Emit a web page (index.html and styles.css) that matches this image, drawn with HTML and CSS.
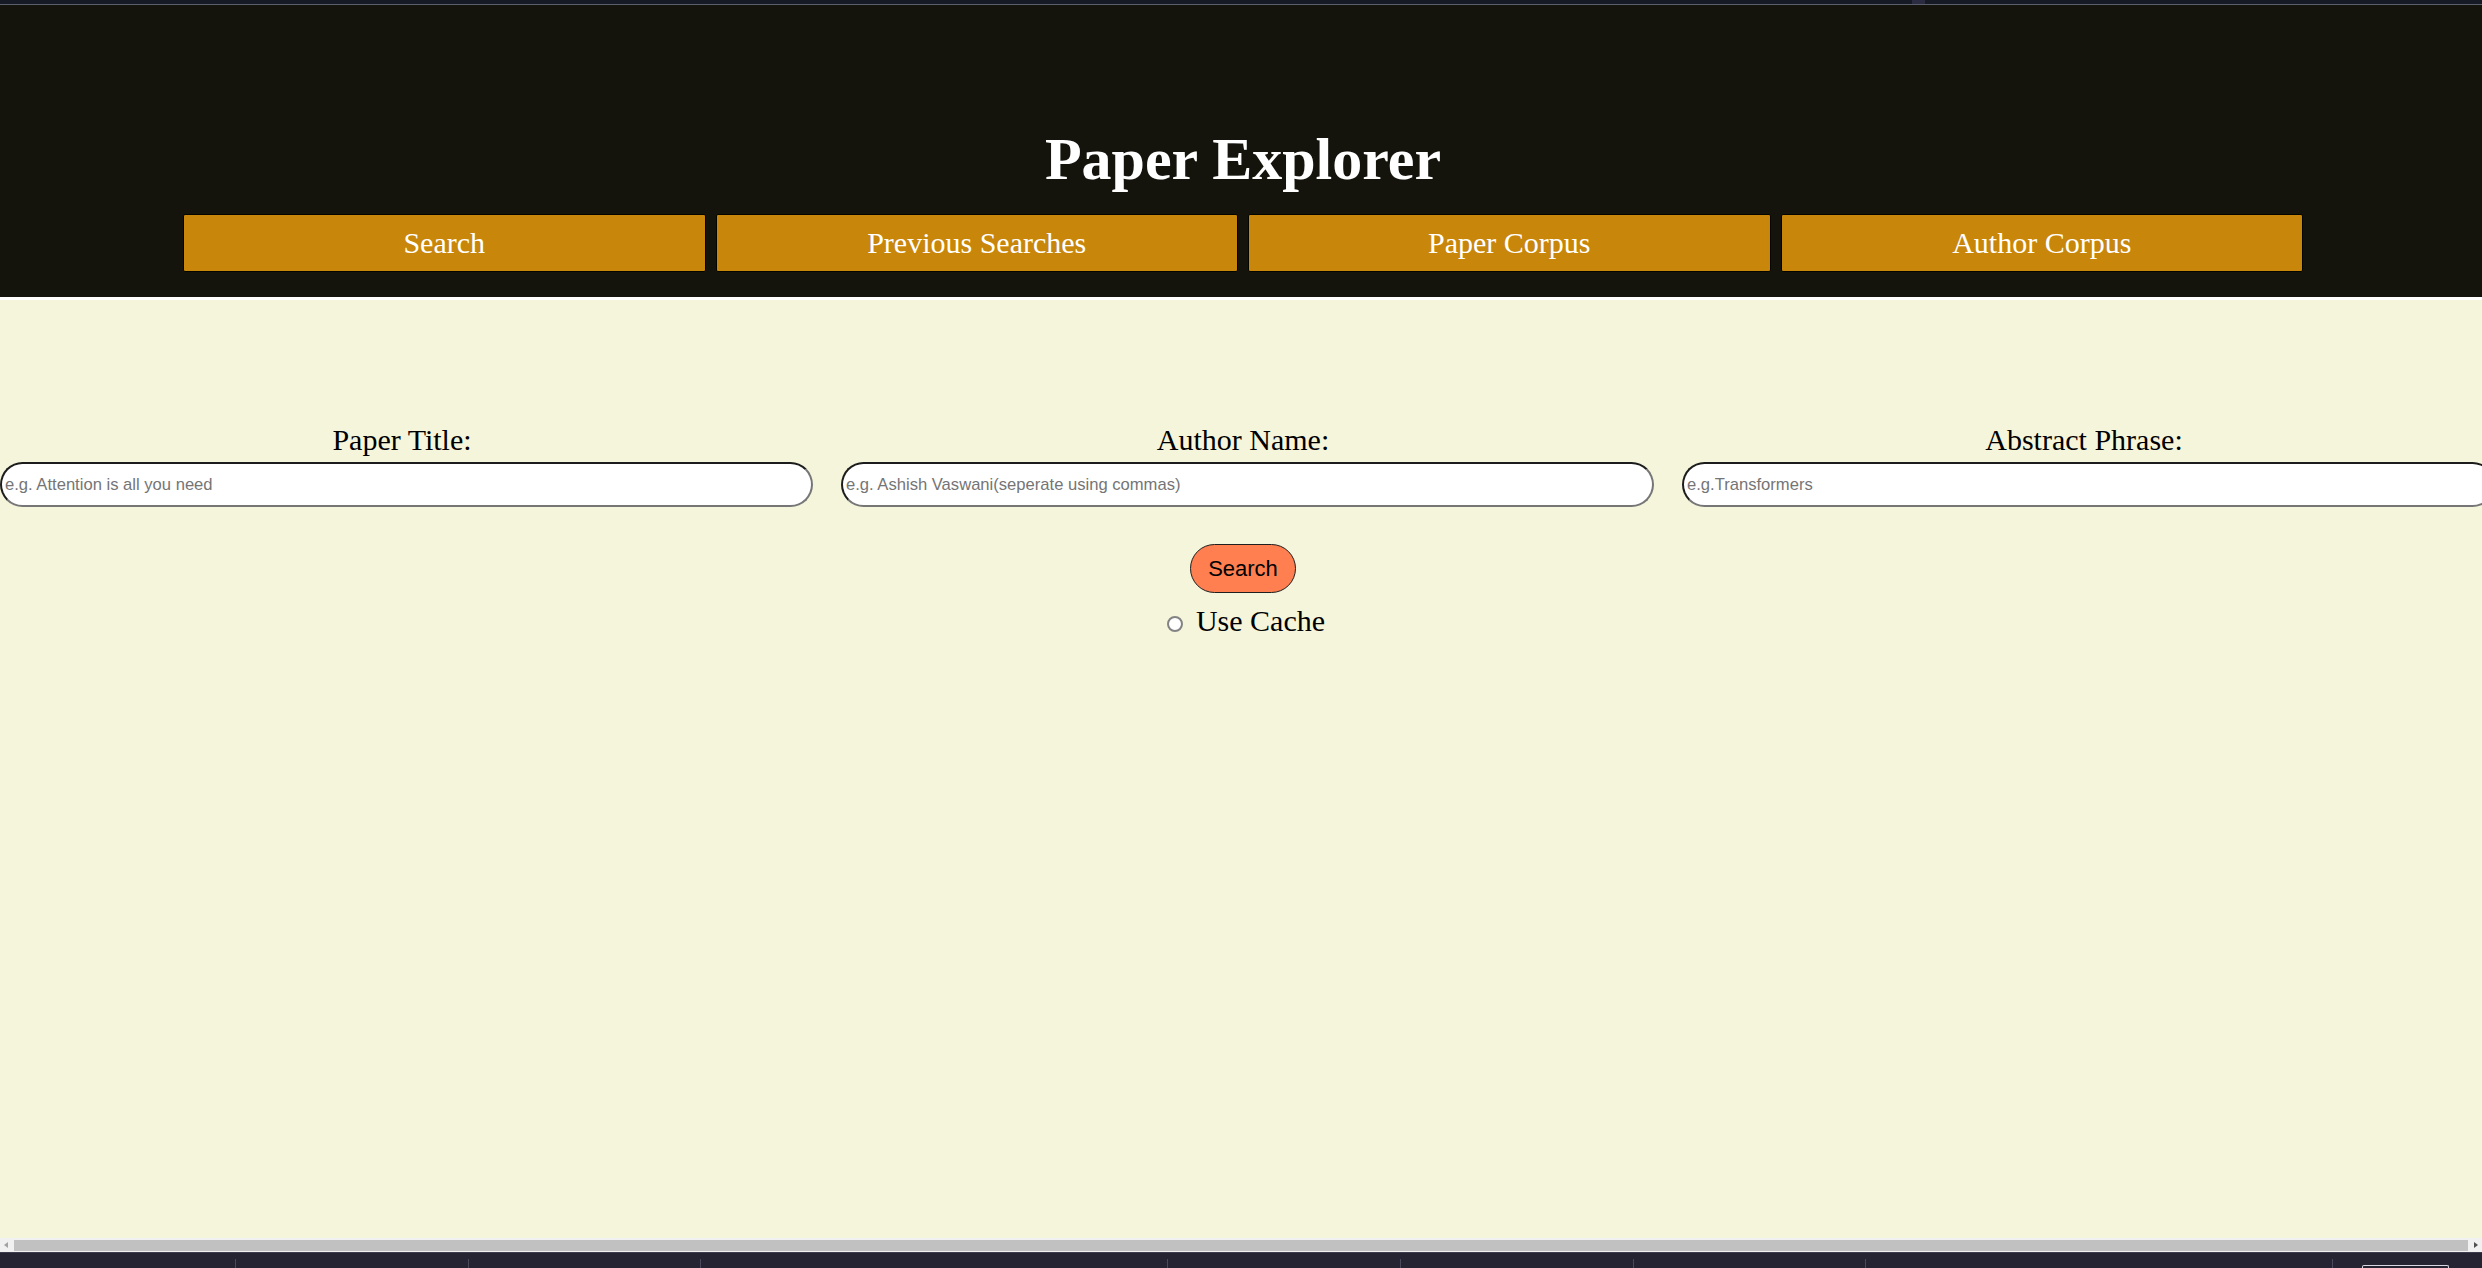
FILE: index.html
```html
<!DOCTYPE html>
<html lang="en">
<head>
<meta charset="utf-8">
<title>Paper Explorer</title>
<link rel="stylesheet" href="styles.css">
</head>
<body>
<div class="topbar"><div class="topbar-fill"></div><div class="topbar-tab"></div><div class="topbar-rest"></div></div>
<header class="header">
  <h1 class="title">Paper Explorer</h1>
  <nav class="nav">
    <div class="nav-btn">Search</div>
    <div class="nav-btn">Previous Searches</div>
    <div class="nav-btn">Paper Corpus</div>
    <div class="nav-btn">Author Corpus</div>
  </nav>
</header>
<div class="sep"></div>
<main class="main">
  <div class="fields">
    <div class="field">
      <label class="field-label">Paper Title:</label>
      <input class="field-input" type="text" placeholder="e.g. Attention is all you need">
    </div>
    <div class="field">
      <label class="field-label">Author Name:</label>
      <input class="field-input" type="text" placeholder="e.g. Ashish Vaswani(seperate using commas)">
    </div>
    <div class="field">
      <label class="field-label">Abstract Phrase:</label>
      <input class="field-input" type="text" placeholder="e.g.Transformers">
    </div>
  </div>
  <div class="actions">
    <button class="search-btn">Search</button>
    <div class="cache-row">
      <span class="radio"></span>
      <span class="cache-label">Use Cache</span>
    </div>
  </div>
</main>
<div class="hscroll">
  <span class="arrow arrow-left"></span>
  <div class="thumb"></div>
  <span class="arrow arrow-right"></span>
</div>
<div class="taskbar">
  <div class="seg w236"></div>
  <div class="seg w233"></div>
  <div class="seg w232"></div>
  <div class="seg w467"></div>
  <div class="seg w233"></div>
  <div class="seg w233"></div>
  <div class="seg w232"></div>
  <div class="seg w467"></div>
  <div class="seg last"><div class="tray"></div></div>
</div>
</body>
</html>
```
FILE: styles.css
```css
html, body {
  margin: 0;
  padding: 0;
}
body {
  height: 100vh;
  display: flex;
  flex-direction: column;
  overflow: hidden;
  background: #f5f5dc;
  font-family: "Liberation Serif", "Times New Roman", serif;
}
.topbar {
  height: 4px;
  flex: none;
  display: flex;
  background: #161a25;
  border-bottom: 1px solid #5b5f6b;
}
.topbar-fill { width: 1912px; }
.topbar-tab { width: 13px; background: #2b2b42; }
.topbar-rest { flex: 1; }
.header {
  flex: none;
  background: #14140d;
  padding: 120px 0 25px 4px;
}
.title {
  margin: 0;
  color: #ffffff;
  font-family: "Liberation Serif", "Times New Roman", serif;
  font-weight: bold;
  font-size: 60px;
  line-height: 69px;
  text-align: center;
}
.nav {
  width: 2120px;
  margin: 20px auto 0;
  display: flex;
  gap: 10px;
}
.nav-btn {
  flex: 1;
  background: #c8860a;
  border: 1px solid #050500;
  border-radius: 2px;
  color: #ffffff;
  font-size: 30px;
  line-height: 34px;
  padding: 11px 0;
  text-align: center;
}
.sep {
  height: 3px;
  flex: none;
  background: #ffffff;
}
.main {
  flex: 1;
  overflow: hidden;
  padding-top: 123px;
}
.fields {
  display: flex;
  gap: 28px;
}
.field {
  width: 813px;
  flex: none;
  display: flex;
  flex-direction: column;
}
.field-label {
  display: block;
  text-align: center;
  font-size: 30px;
  line-height: 34px;
  padding-right: 9px;
  margin-bottom: 5px;
  color: #000;
}
.field-input {
  box-sizing: border-box;
  width: 100%;
  height: 45px;
  margin: 0;
  padding: 0 3px;
  background: #ffffff;
  border-style: solid;
  border-width: 2px;
  border-color: #1c1c1c #767676 #767676 #1c1c1c;
  border-radius: 23px;
  font-family: "Liberation Sans", Arial, sans-serif;
  font-size: 16.6px;
  color: #000;
  outline: none;
}
.field-input::placeholder {
  color: #757575;
}
.actions {
  display: flex;
  flex-direction: column;
  align-items: center;
  padding-left: 4px;
}
.search-btn {
  margin-top: 37px;
  background: #ff7f50;
  border: 1px solid #1e1e1e;
  border-radius: 25px;
  padding: 11px 17px;
  font-family: "Liberation Sans", Arial, sans-serif;
  font-size: 22px;
  line-height: 25px;
  color: #000;
}
.cache-row {
  margin-top: 11px;
  display: flex;
  align-items: center;
  padding-left: 6px;
}
.radio {
  box-sizing: border-box;
  width: 16px;
  height: 16px;
  margin-top: 5px;
  margin-right: 13px;
  border: 2px solid #838383;
  border-radius: 50%;
  background: #ffffff;
}
.cache-label {
  font-size: 30px;
  line-height: 34px;
  color: #000;
}
.hscroll {
  flex: none;
  height: 14px;
  background: #f1f1f1;
  display: flex;
  align-items: center;
}
.thumb {
  flex: 1;
  height: 11px;
  margin: 0 6px;
  background: #c1c1c1;
}
.arrow {
  width: 0;
  height: 0;
  border-top: 3px solid transparent;
  border-bottom: 3px solid transparent;
}
.arrow-left {
  margin-left: 4px;
  border-right: 4px solid #a3a3a3;
}
.arrow-right {
  margin-right: 4px;
  border-left: 4px solid #505050;
}
.taskbar {
  flex: none;
  height: 15px;
  background: #242433;
  border-top: 1px solid #3c3c4c;
  display: flex;
  align-items: flex-end;
}
.seg {
  box-sizing: border-box;
  height: 9px;
  flex: none;
  border-right: 1px solid #4a4a5c;
}
.w236 { width: 236px; }
.w233 { width: 233px; }
.w232 { width: 232px; }
.w467 { width: 467px; }
.seg.last {
  flex: 1;
  border-right: none;
  display: flex;
  align-items: flex-end;
}
.tray {
  margin-left: 29px;
  width: 87px;
  height: 3px;
  box-sizing: border-box;
  border: 1px solid #d8d8e0;
  border-bottom: none;
  border-radius: 2px 2px 0 0;
}
```
